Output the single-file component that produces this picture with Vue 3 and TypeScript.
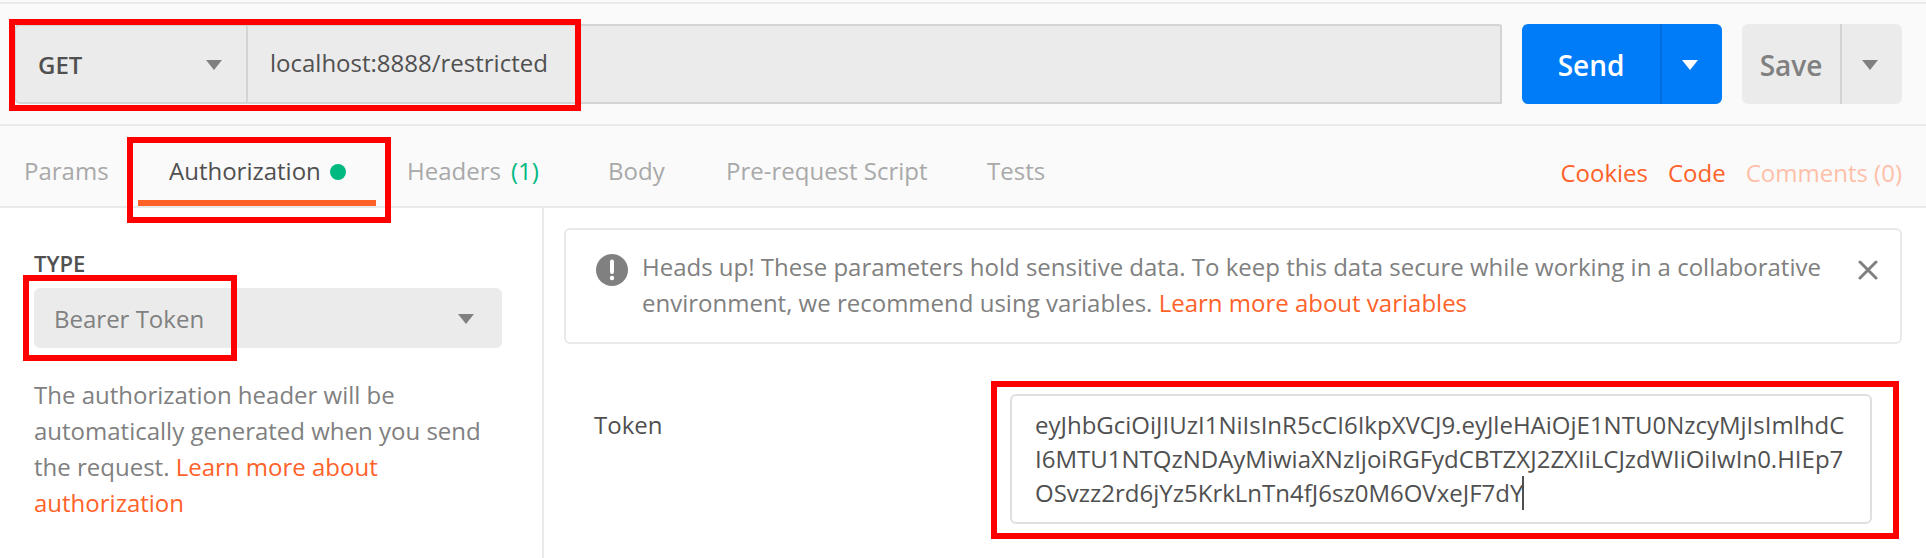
<script setup lang="ts">
interface Tab {
  id: string
  label: string
  count?: string
  active?: boolean
}

const tabs: Tab[] = [
  { id: 'params', label: 'Params' },
  { id: 'auth', label: 'Authorization', active: true },
  { id: 'headers', label: 'Headers', count: '(1)' },
  { id: 'body', label: 'Body' },
  { id: 'prerequest', label: 'Pre-request Script' },
  { id: 'tests', label: 'Tests' },
]

const tokenLines: string[] = [
  'eyJhbGciOiJIUzI1NiIsInR5cCI6IkpXVCJ9.eyJleHAiOjE1NTU0NzcyMjIsImlhdC',
  'I6MTU1NTQzNDAyMiwiaXNzIjoiRGFydCBTZXJ2ZXIiLCJzdWIiOiIwIn0.HIEp7',
  'OSvzz2rd6jYz5KrkLnTn4fJ6sz0M6OVxeJF7dY',
]
</script>

<template>
  <div class="app">
    <header class="request-bar">
      <div class="url-group">
        <div class="method">
          <span>GET</span>
          <svg class="caret" viewBox="0 0 16 10"><path d="M0 0H16L8 10Z" /></svg>
        </div>
        <div class="url">localhost:8888/restricted</div>
      </div>
      <div class="button send">
        <span class="button-label">Send</span>
        <span class="button-more">
          <svg class="caret" viewBox="0 0 16 10"><path d="M0 0H16L8 10Z" /></svg>
        </span>
      </div>
      <div class="button save">
        <span class="button-label">Save</span>
        <span class="button-more">
          <svg class="caret" viewBox="0 0 16 10"><path d="M0 0H16L8 10Z" /></svg>
        </span>
      </div>
    </header>

    <nav class="tab-bar">
      <div class="tabs">
        <div v-for="tab in tabs" :key="tab.id" class="tab" :class="[tab.id, { active: tab.active }]">
          <span>{{ tab.label }}</span>
          <span v-if="tab.count" class="count">{{ tab.count }}</span>
          <i v-if="tab.active" class="dot"></i>
        </div>
      </div>
      <div class="links">
        <a>Cookies</a>
        <a>Code</a>
        <a class="faded">Comments (0)</a>
      </div>
    </nav>

    <main class="panel">
      <aside class="sidebar">
        <div class="type-label">TYPE</div>
        <div class="select">
          <span>Bearer Token</span>
          <svg class="caret" viewBox="0 0 16 10"><path d="M0 0H16L8 10Z" /></svg>
        </div>
        <p class="help">
          The authorization header will be<br />automatically generated when you send<br />the request.
          <a>Learn more about<br />authorization</a>
        </p>
      </aside>

      <section class="content">
        <div class="notice">
          <svg class="alert" viewBox="0 0 32 32">
            <circle cx="16" cy="16" r="16" fill="#808080" />
            <path d="M16 7.5V18" stroke="#fff" stroke-width="4" stroke-linecap="round" />
            <circle cx="16" cy="24" r="2.2" fill="#fff" />
          </svg>
          <p class="notice-text">
            Heads up! These parameters hold sensitive data. To keep this data secure while working in a collaborative<br />environment,
            we recommend using variables. <a>Learn more about variables</a>
          </p>
          <svg class="close" viewBox="0 0 20 20">
            <path d="M2 2L18 18M18 2L2 18" stroke="#808080" stroke-width="3" stroke-linecap="round" />
          </svg>
        </div>
        <div class="field">
          <label class="field-label">Token</label>
          <div class="token">
            <div v-for="(line, i) in tokenLines" :key="i" class="token-line">
              <span>{{ line }}</span><i v-if="i === tokenLines.length - 1" class="cursor"></i>
            </div>
          </div>
        </div>
      </section>
    </main>

    <div class="mark mark-url"></div>
    <div class="mark mark-tab"></div>
    <div class="mark mark-type"></div>
    <div class="mark mark-token"></div>
  </div>
</template>

<style>
body {
  margin: 0;
  background: #fff;
}
</style>

<style scoped>
.app {
  position: relative;
  box-sizing: border-box;
  width: 1926px;
  height: 558px;
  overflow: hidden;
  padding-top: 2px;
  background: #fafafa;
  color: #505050;
  font-family: 'Open Sans', 'Noto Sans', sans-serif;
  font-size: 24px;
  line-height: 36px;
  white-space: nowrap;
}
.app * {
  box-sizing: border-box;
}
.caret {
  width: 16px;
  height: 10px;
  fill: #808080;
  flex: none;
}
a {
  color: #ff6229;
}
.request-bar {
  display: flex;
  height: 124px;
  padding: 20px 24px 0 14px;
  gap: 20px;
  border-top: 2px solid #e9e9e9;
  border-bottom: 2px solid #e9e9e9;
}
.url-group {
  display: flex;
  flex: 1;
  height: 80px;
  background: #ebebeb;
  border: 2px solid #d4d4d4;
  border-radius: 6px 3px 0 6px;
}
.method {
  display: flex;
  justify-content: space-between;
  width: 232px;
  padding: 21px 24px 0 22px;
  border-right: 2px solid #d4d4d4;
  font-weight: 600;
}
.method .caret {
  margin-top: 13px;
}
.url {
  padding: 19px 0 0 22px;
}
.button {
  display: flex;
  height: 80px;
  border-radius: 6px;
  font-size: 28px;
  font-weight: 600;
  line-height: 80px;
  text-align: center;
}
.button-label {
  flex: 1;
  padding-top: 1px;
}
.button-more {
  display: flex;
  width: 62px;
  padding: 36px 0 0 20px;
  border-left: 2px solid rgba(0, 0, 0, 0.1);
}
.send {
  width: 200px;
  background: #007cf9;
  color: #fff;
}
.send .caret {
  fill: #fff;
}
.save {
  width: 160px;
  background: #ebebeb;
  color: #808080;
}
.tab-bar {
  display: flex;
  justify-content: space-between;
  height: 82px;
  padding-right: 24px;
  border-bottom: 2px solid #e9e9e9;
}
.tabs {
  display: flex;
}
.tab {
  display: flex;
  height: 80px;
  padding: 27px 30px 0;
  color: #a9a9a9;
}
.params {
  width: 138px;
  padding-left: 24px;
}
.auth {
  width: 238px;
  padding-left: 31px;
}
.headers {
  width: 202px;
  padding-left: 31px;
}
.body {
  width: 118px;
}
.prerequest {
  width: 261px;
}
.active {
  color: #505050;
  border-bottom: 6px solid #ff6229;
}
.count {
  margin-left: 10px;
  color: #00b981;
}
.dot {
  width: 17px;
  height: 16px;
  margin: 11px 0 0 9px;
  border-radius: 50%;
  background: #00b981;
}
.links {
  display: flex;
  gap: 20px;
  padding-top: 29px;
}
.faded {
  color: #ffc0a9;
}
.panel {
  display: flex;
  height: 350px;
  background: #fff;
}
.sidebar {
  width: 544px;
  padding: 39px 40px 0 34px;
  border-right: 2px solid #e9e9e9;
}
.type-label {
  height: 41px;
  font-size: 22px;
  font-weight: 600;
  line-height: 33px;
}
.select {
  display: flex;
  justify-content: space-between;
  height: 60px;
  padding: 13px 28px 0 20px;
  border-radius: 6px;
  background: #ebebeb;
  color: #808080;
}
.select .caret {
  margin-top: 13px;
}
.help {
  margin: 29px 0 0;
  color: #808080;
}
.content {
  flex: 1;
  padding: 20px 24px 0 20px;
}
.notice {
  display: flex;
  height: 116px;
  padding: 19px 22px 0 30px;
  border: 2px solid #e9e9e9;
  border-radius: 6px;
  color: #808080;
}
.alert {
  width: 32px;
  height: 32px;
  margin-top: 5px;
}
.notice-text {
  flex: 1;
  margin: 0 0 0 14px;
}
.close {
  width: 20px;
  height: 20px;
  margin-top: 11px;
}
.field {
  display: flex;
  justify-content: space-between;
  padding: 50px 30px 0 30px;
}
.field-label {
  padding-top: 13px;
}
.token {
  width: 862px;
  height: 130px;
  padding: 12px 23px;
  border: 2px solid #dfdfdf;
  border-radius: 6px;
}
.token-line {
  display: flex;
  height: 34px;
  line-height: 34px;
}
.cursor {
  width: 2px;
  height: 34px;
  margin-left: -1px;
  background: #505050;
}
.mark {
  position: absolute;
  border: 6px solid #f00;
}
.mark-url {
  left: 9px;
  top: 19px;
  width: 572px;
  height: 92px;
}
.mark-tab {
  left: 127px;
  top: 137px;
  width: 264px;
  height: 86px;
}
.mark-type {
  left: 23px;
  top: 275px;
  width: 214px;
  height: 86px;
}
.mark-token {
  left: 991px;
  top: 381px;
  width: 908px;
  height: 158px;
}
</style>
